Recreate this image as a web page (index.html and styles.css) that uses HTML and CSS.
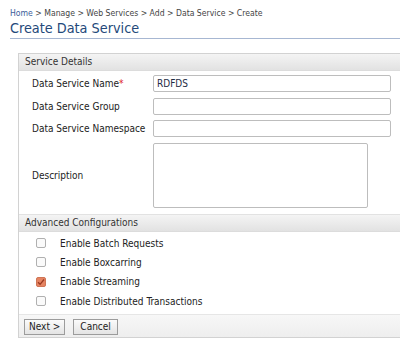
FILE: index.html
```html
<!DOCTYPE html>
<html>
<head>
<meta charset="utf-8">
<link rel="stylesheet" href="styles.css">
</head>
<body>
<div class="breadcrumb"><a class="crumb-link">Home</a> &gt; Manage &gt; Web Services &gt; Add &gt; Data Service &gt; Create</div>
<h1 class="title">Create Data Service</h1>
<div class="panel">
  <div class="panel-head">Service Details</div>
  <div class="fields">
    <div class="row"><label class="lbl">Data Service Name<span class="req">*</span></label><input class="txt" type="text" value="RDFDS"></div>
    <div class="row"><label class="lbl">Data Service Group</label><input class="txt" type="text"></div>
    <div class="row"><label class="lbl">Data Service Namespace</label><input class="txt" type="text"></div>
    <div class="row row-desc"><label class="lbl">Description</label><textarea class="area"></textarea></div>
  </div>
  <div class="panel-head head2">Advanced Configurations</div>
  <div class="checks">
    <div class="crow"><span class="cb"></span><span class="clbl">Enable Batch Requests</span></div>
    <div class="crow"><span class="cb"></span><span class="clbl">Enable Boxcarring</span></div>
    <div class="crow"><span class="cb cb-on"><svg width="8" height="8" viewBox="0 0 8 8"><path d="M1 4.2 L3.1 6.3 L7 1.5" fill="none" stroke="#9a3a22" stroke-width="1.3"/></svg></span><span class="clbl">Enable Streaming</span></div>
    <div class="crow"><span class="cb"></span><span class="clbl">Enable Distributed Transactions</span></div>
  </div>
  <div class="btnbar">
    <button class="btn">Next &gt;</button>
    <button class="btn btn-wide">Cancel</button>
  </div>
</div>
</body>
</html>
```

FILE: styles.css
```css
html, body {
  margin: 0;
  padding: 0;
  overflow: hidden;
  background: #fff;
}
body {
  font-family: "DejaVu Sans", sans-serif;
  font-stretch: condensed;
  color: #333;
  width: 400px;
  height: 340px;
}
.breadcrumb {
  font-size: 8.6px;
  color: #444;
  padding: 8px 0 0 10px;
  height: 11px;
  line-height: 11px;
}
.crumb-link {
  color: #3b5e9a;
}
.title {
  margin: 0 0 0 10px;
  font-size: 14.3px;
  font-weight: normal;
  color: #24497a;
  height: 19px;
  line-height: 18px;
  border-bottom: 1px solid #a7b7d2;
}
.panel {
  margin: 14px 0 0 18px;
  width: 400px;
  border: 1px solid #d2d2d2;
  border-right: none;
}
.panel-head {
  height: 16px;
  line-height: 16px;
  font-size: 10px;
  padding-left: 6px;
  color: #333;
  background: linear-gradient(#f4f4f4, #e2e2e2);
  border-bottom: 1px solid #dcdcdc;
}
.head2 {
  border-top: 1px solid #e2e2e2;
  margin-top: 0;
}
.fields {
  display: flex;
  flex-direction: column;
  gap: 5.5px;
  padding: 4px 0 6px 13px;
}
.row {
  display: flex;
  align-items: center;
}
.lbl {
  width: 121px;
  font-size: 10px;
  color: #222;
}
.req {
  color: #d22;
}
.txt {
  box-sizing: border-box;
  width: 238px;
  height: 17px;
  margin: 0;
  padding: 0 3px;
  border: 1px solid #bdbdbd;
  border-radius: 2px;
  font-family: "DejaVu Sans", sans-serif;
  font-stretch: condensed;
  font-size: 10px;
  color: #1e2b44;
  outline: none;
}
.area {
  box-sizing: border-box;
  width: 215px;
  height: 65px;
  margin: 0;
  border: 1px solid #bdbdbd;
  border-radius: 2px;
  resize: none;
  outline: none;
}
.checks {
  padding: 2px 0 3px 17px;
}
.crow {
  display: flex;
  align-items: center;
  height: 19.33px;
}
.cb {
  box-sizing: border-box;
  width: 10px;
  height: 10px;
  border: 1px solid #b0b0b0;
  border-radius: 2px;
  background: #fafafa;
  display: flex;
  align-items: center;
  justify-content: center;
}
.cb-on {
  background: #e58462;
  border-color: #cf7555;
}
.clbl {
  margin-left: 14px;
  font-size: 10px;
  color: #222;
}
.btnbar {
  display: flex;
  gap: 8px;
  height: 23px;
  box-sizing: border-box;
  padding: 4px 0 0 5px;
  background: linear-gradient(#f7f7f7, #eeeeee);
  border-top: 1px solid #e6e6e6;
}
.btn {
  height: 16px;
  margin: 0;
  padding: 0 4px;
  font-family: "DejaVu Sans", sans-serif;
  font-stretch: condensed;
  font-size: 10px;
  color: #222;
  border: 1px solid #9c9c9c;
  border-radius: 0;
  background: linear-gradient(#fbfbfb, #e4e4e4);
  line-height: 14px;
}
.btn-wide {
  padding: 0 6px;
}
```
